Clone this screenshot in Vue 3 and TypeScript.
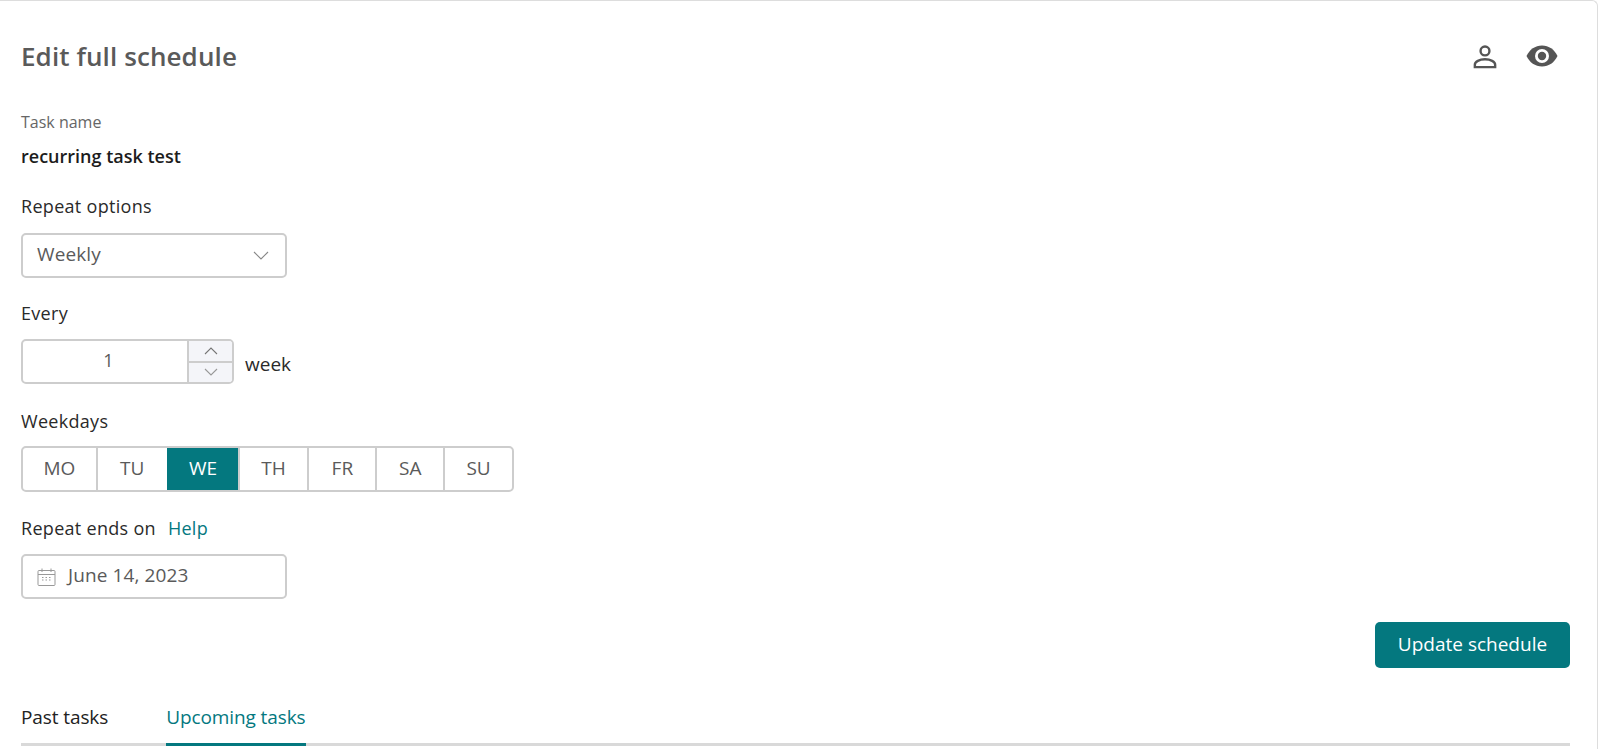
<template>
  <section class="schedule-card">
    <header class="card-header">
      <h1 class="card-title">Edit full schedule</h1>
      <div class="header-icons">
        <svg class="icon-person" width="24" height="25" viewBox="0 0 26 26" fill="none" stroke="#555" stroke-width="2.6">
          <circle cx="13" cy="7" r="4.800" />
          <path d="M2 24.500v-2.500c0-3.500 5-6 11-6s11 2.500 11 6v2.500z" stroke-linejoin="miter" />
        </svg>
        <svg class="icon-eye" width="32" height="22" viewBox="0 0 32 22">
          <path d="M0.5 11C3.5 4.6 9.2 0.5 16 0.5S28.500 4.600 31.500 11C28.500 17.400 22.800 21.500 16 21.500S3.500 17.400 0.500 11z" fill="#555" />
          <circle cx="16" cy="11" r="7" fill="#fff" />
          <circle cx="16" cy="11" r="4.200" fill="#555" />
        </svg>
      </div>
    </header>

    <div class="task-block">
      <div class="task-label">Task name</div>
      <div class="task-value">recurring task test</div>
    </div>

    <div class="field repeat-field">
      <label class="field-label">Repeat options</label>
      <div class="input-box select-box">
        <span>Weekly</span>
        <svg width="16" height="9" viewBox="0 0 16 9" fill="none" stroke="#888" stroke-width="1.100">
          <path d="M1 1l7 7 7-7" />
        </svg>
      </div>
    </div>

    <div class="field every-field">
      <label class="field-label">Every</label>
      <div class="stepper-row">
        <div class="stepper">
          <div class="stepper-value">1</div>
          <div class="stepper-btns">
            <div class="stepper-btn">
              <svg width="14" height="8" viewBox="0 0 14 8" fill="none" stroke="#777" stroke-width="1.100"><path d="M1 7l6-6 6 6" /></svg>
            </div>
            <div class="stepper-btn">
              <svg width="14" height="8" viewBox="0 0 14 8" fill="none" stroke="#999" stroke-width="1.100"><path d="M1 1l6 6 6-6" /></svg>
            </div>
          </div>
        </div>
        <span class="unit">week</span>
      </div>
    </div>

    <div class="field weekdays-field">
      <label class="field-label">Weekdays</label>
      <div class="weekdays">
        <div
          v-for="day in days"
          :key="day.name"
          class="weekday"
          :class="{ active: day.name === selectedDay }"
          :style="{ width: day.width + 'px' }"
        >
          {{ day.name }}
        </div>
      </div>
    </div>

    <div class="field ends-field">
      <label class="field-label">Repeat ends on <a class="help-link">Help</a></label>
      <div class="input-box date-box">
        <svg width="19" height="18" viewBox="0 0 19 18" fill="none" stroke="#999" stroke-width="1">
          <rect x="1" y="2.500" width="17" height="15" rx="1" />
          <path d="M1 6.500h17M5 0.500v3.500M14 0.500v3.500" />
          <path d="M5 9.500h9M5 12h9" stroke-dasharray="1.500 2" />
        </svg>
        <span>June 14, 2023</span>
      </div>
    </div>

    <div class="actions">
      <button class="update-btn">Update schedule</button>
    </div>

    <nav class="tabs">
      <div class="tab">Past tasks</div>
      <div class="tab tab-active">Upcoming tasks</div>
    </nav>
  </section>
</template>

<script setup lang="ts">
const selectedDay = 'WE';

const days = [
  { name: 'MO', width: 73 },
  { name: 'TU', width: 71 },
  { name: 'WE', width: 71 },
  { name: 'TH', width: 70 },
  { name: 'FR', width: 68 },
  { name: 'SA', width: 68 },
  { name: 'SU', width: 69 }
];
</script>

<style>
html,
body {
  background: #fff;
}
</style>

<style scoped>
.schedule-card {
  box-sizing: border-box;
  width: 1598px;
  height: 749px;
  padding: 0 27px 0 21px;
  background: #fff;
  border-top: 1px solid #ddd;
  border-right: 1px solid #ddd;
  border-top-right-radius: 6px;
  font-family: "Open Sans", Lato, sans-serif;
  color: #222;
  overflow: hidden;
}

.card-header {
  display: flex;
  align-items: center;
  justify-content: space-between;
  height: 54px;
  padding-top: 28px;
}

.card-title {
  margin: 0;
  font-size: 26px;
  font-weight: 600;
  letter-spacing: 0.1px;
  color: #5a5a5a;
}

.header-icons {
  display: flex;
  align-items: center;
  gap: 29px;
  padding-right: 12px;
}

.task-block {
  margin-top: 30px;
}

.task-label {
  font-size: 16px;
  line-height: 18px;
  color: #666;
}

.task-value {
  margin-top: 15px;
  font-size: 18px;
  line-height: 20px;
  font-weight: 600;
  color: #1c1c1c;
}

.field-label {
  display: block;
  font-size: 18px;
  line-height: 20px;
  letter-spacing: 0.3px;
  color: #2a2a2a;
}

.field {
  margin-top: 26px;
}

.repeat-field {
  margin-top: 30px;
}

.every-field {
  margin-top: 25px;
}

.weekdays-field {
  margin-top: 27px;
}

.input-box {
  box-sizing: border-box;
  display: flex;
  align-items: center;
  width: 266px;
  height: 45px;
  margin-top: 17px;
  border: 2px solid #cdcdcd;
  border-radius: 5px;
  font-size: 19px;
  letter-spacing: 0.1px;
  color: #5a5a5a;
}

.ends-field .input-box {
  margin-top: 16px;
}

.input-box span {
  padding-bottom: 3px;
}

.select-box {
  justify-content: space-between;
  padding: 0 16px 0 14px;
}

.date-box {
  gap: 12px;
  padding-left: 14px;
}

.stepper-row {
  display: flex;
  align-items: center;
  gap: 11px;
  margin-top: 16px;
}

.stepper {
  box-sizing: border-box;
  display: flex;
  width: 213px;
  height: 45px;
  border: 2px solid #cdcdcd;
  border-radius: 5px;
  overflow: hidden;
}

.stepper-value {
  display: flex;
  flex: 1;
  align-items: center;
  justify-content: center;
  padding: 0 0 3px 7px;
  font-size: 18px;
  color: #5a5a5a;
}

.stepper-btns {
  display: flex;
  flex-direction: column;
  width: 43px;
  border-left: 2px solid #cdcdcd;
}

.stepper-btn {
  display: flex;
  flex: 1;
  align-items: center;
  justify-content: center;
  background: #f4f5f9;
}

.stepper-btn + .stepper-btn {
  border-top: 2px solid #cdcdcd;
}

.unit {
  padding-top: 4px;
  font-size: 19px;
  color: #2a2a2a;
}

.weekdays {
  box-sizing: border-box;
  display: flex;
  width: 493px;
  height: 46px;
  margin-top: 15px;
  border: 2px solid #cdcdcd;
  border-radius: 5px;
  overflow: hidden;
}

.weekday {
  box-sizing: border-box;
  display: flex;
  align-items: center;
  justify-content: center;
  padding-bottom: 2px;
  font-size: 19px;
  color: #5a5a5a;
  border-left: 2px solid #cdcdcd;
}

.weekday:first-child {
  border-left: 0;
}

.weekday.active {
  background: #04787f;
  border-left-color: #04787f;
  color: #fff;
}

.help-link {
  margin-left: 7px;
  color: #04787f;
}

.actions {
  display: flex;
  justify-content: flex-end;
  margin-top: 23px;
}

.update-btn {
  width: 195px;
  height: 46px;
  padding: 0 0 2px;
  background: #04787f;
  border: 0;
  border-radius: 5px;
  font-family: inherit;
  font-size: 19px;
  color: #fff;
}

.tabs {
  display: flex;
  gap: 58px;
  height: 48px;
  margin-top: 27px;
  border-bottom: 3px solid #d9d9d9;
}

.tab {
  box-sizing: border-box;
  height: 51px;
  padding-top: 11px;
  font-size: 19px;
  line-height: 22px;
  letter-spacing: -0.1px;
  color: #222;
}

.tab-active {
  color: #04787f;
  border-bottom: 3px solid #04787f;
}
</style>
